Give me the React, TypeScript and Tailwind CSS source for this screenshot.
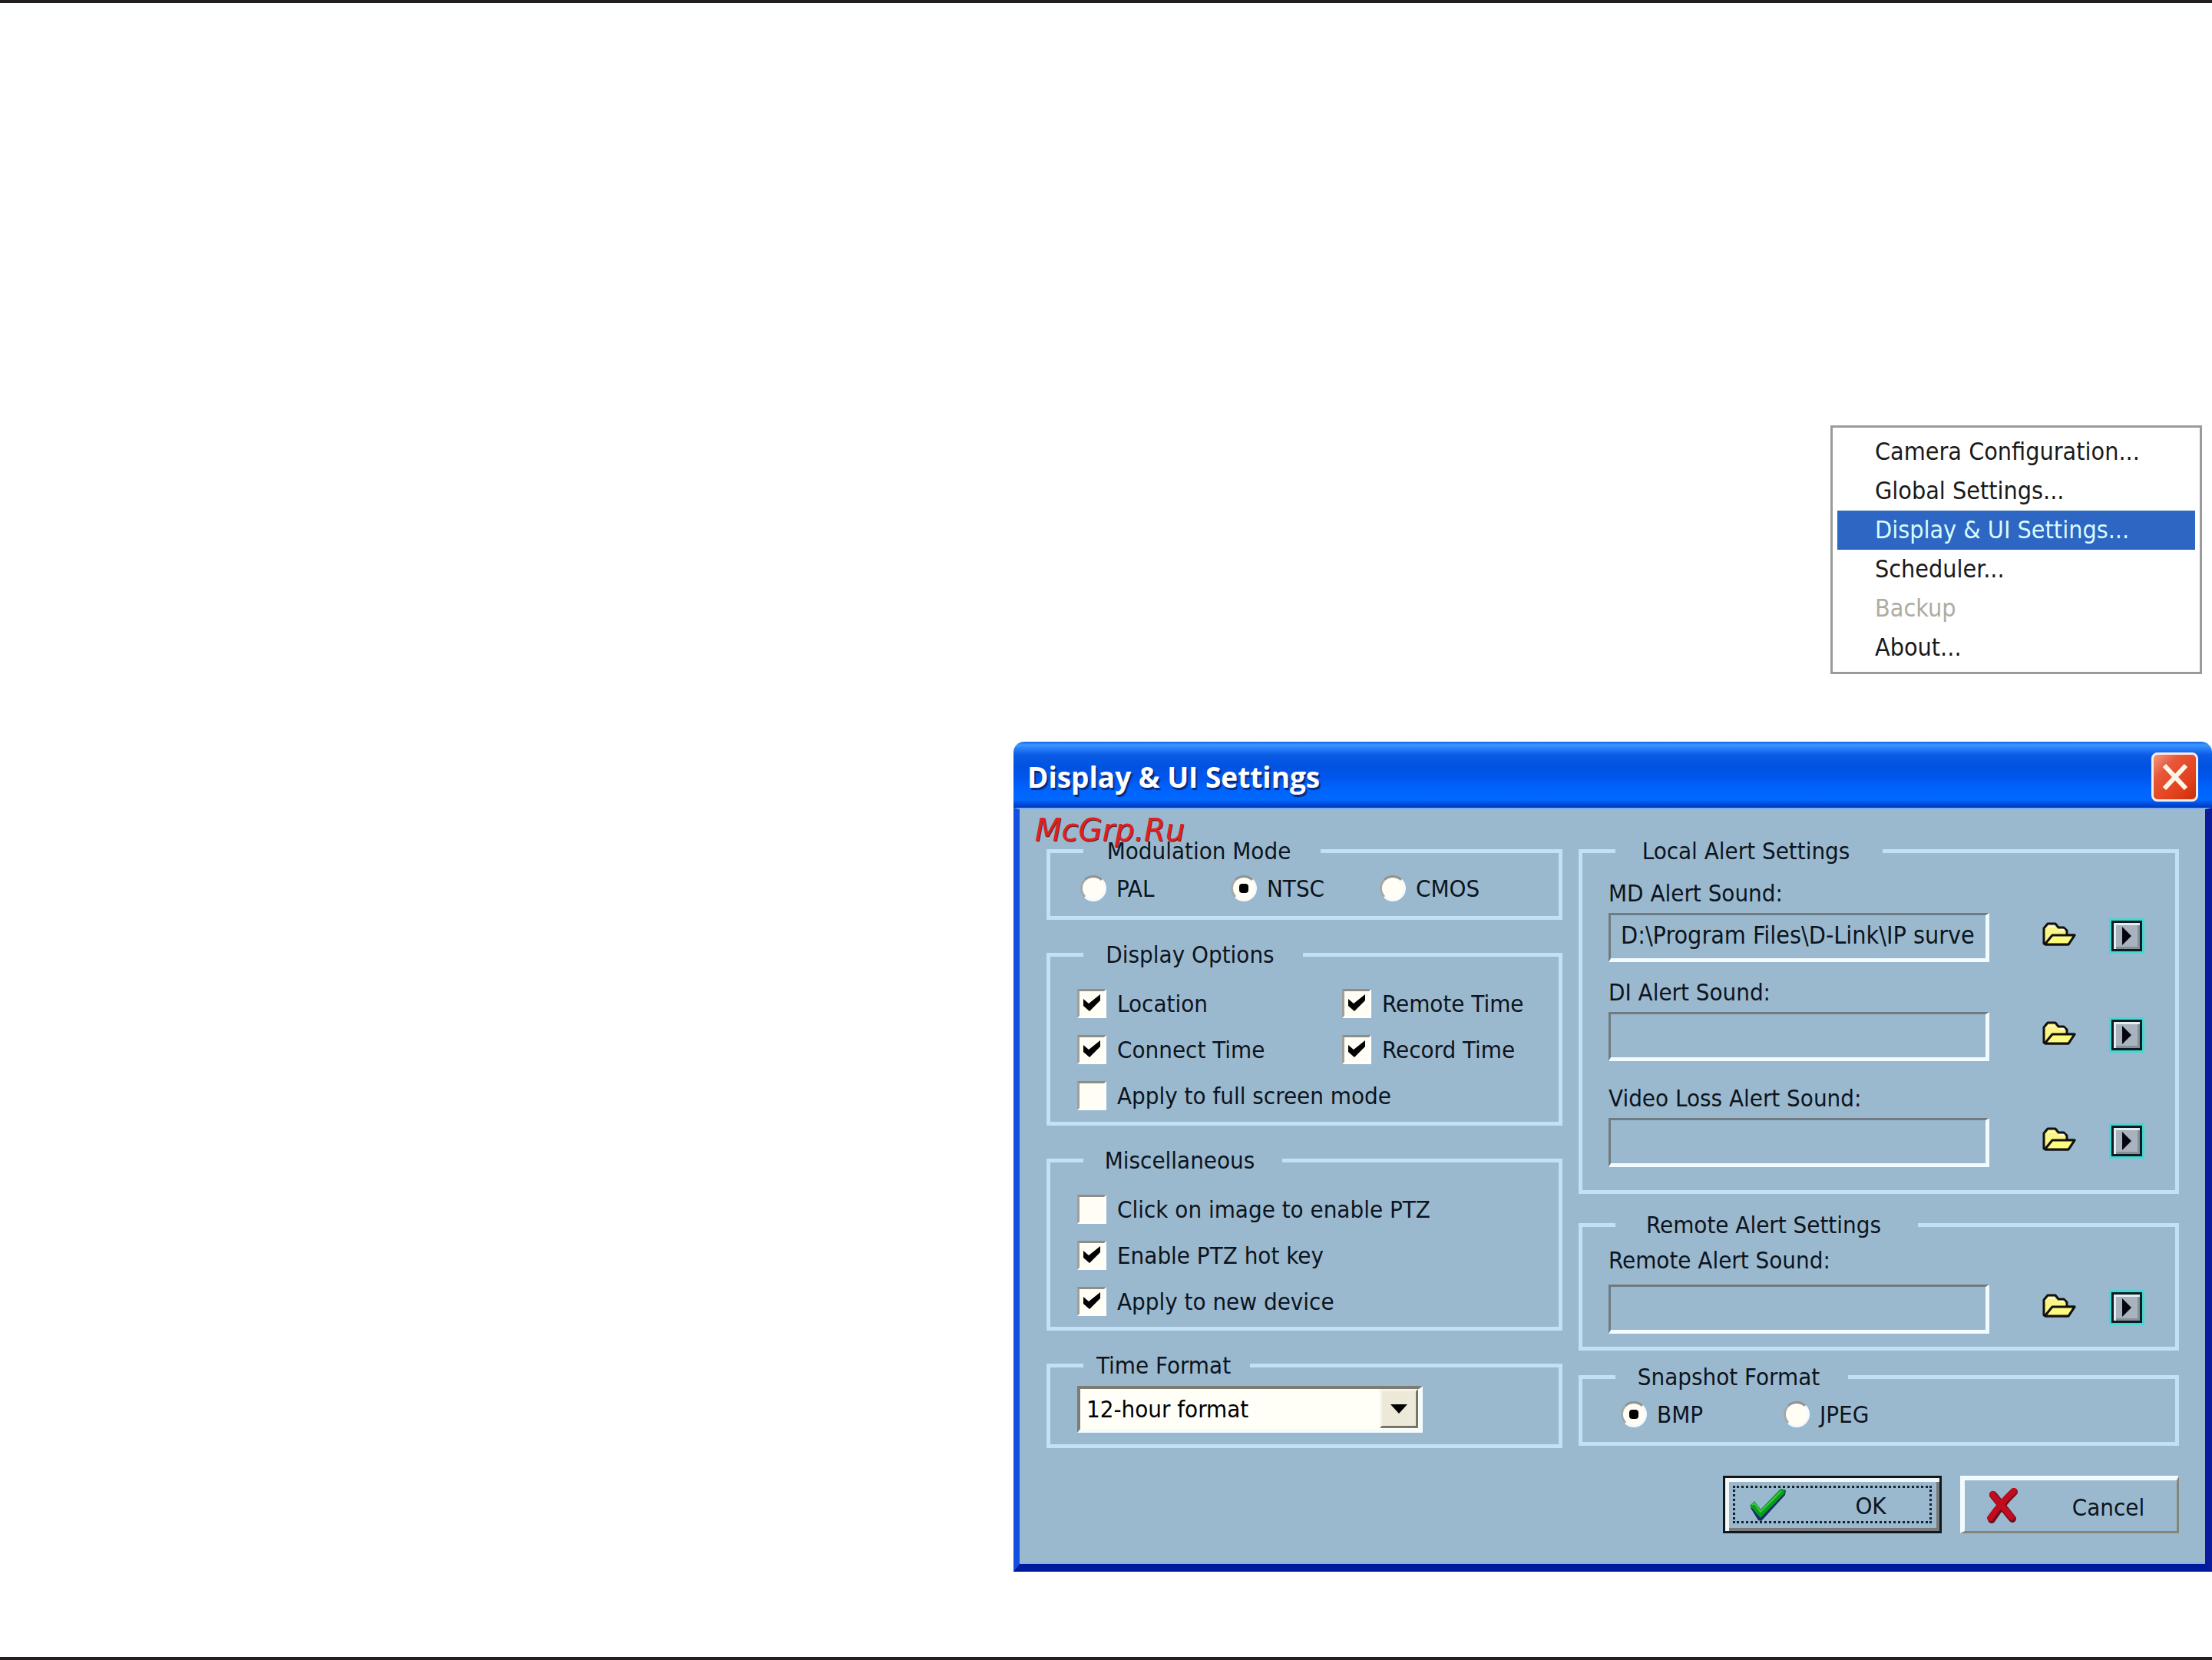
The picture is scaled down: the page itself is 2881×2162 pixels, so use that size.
import { useState } from "react"
import type { ReactNode } from "react"

const menuItems = [
  { label: "Camera Configuration..." },
  { label: "Global Settings..." },
  { label: "Display & UI Settings...", active: true },
  { label: "Scheduler..." },
  { label: "Backup", disabled: true },
  { label: "About..." },
]

function ContextMenu() {
  return (
    <nav className="border-[3px] border-[#9a9a9a] bg-white px-[6px] py-[6px] w-[484px]">
      {menuItems.map((item) => (
        <button
          key={item.label}
          type="button"
          disabled={item.disabled}
          className={
            item.active
              ? "block w-full h-[51px] pl-[49px] text-left text-[32px] leading-[51px] bg-[#2d66c3] text-[#d8fbff]"
              : "block w-full h-[51px] pl-[49px] text-left text-[32px] leading-[51px] text-[#1a1a1a] disabled:text-[#aeaca0]"
          }
        >
          {item.label}
        </button>
      ))}
    </nav>
  )
}

interface GroupProps {
  title: string
  legendClass: string
  className?: string
  children: ReactNode
}

function Group({ title, legendClass, className = "", children }: GroupProps) {
  return (
    <fieldset className={`min-w-0 border-[5px] border-[#c3e0f5] ${className}`}>
      <legend className={`flex justify-center ml-[43px] pr-2 h-9 leading-9 whitespace-nowrap ${legendClass}`}>
        {title}
      </legend>
      {children}
    </fieldset>
  )
}

function CheckOption({ label, defaultChecked = false }: { label: string; defaultChecked?: boolean }) {
  return (
    <label className="flex items-center gap-[14px] h-10 whitespace-nowrap">
      <span className="grid">
        <input
          type="checkbox"
          defaultChecked={defaultChecked}
          className="peer col-start-1 row-start-1 appearance-none w-[38px] h-[38px] bg-[#fffdf4] border-[3px] border-t-[#8f8d84] border-l-[#a19f96] border-r-white border-b-white"
        />
        <svg
          viewBox="0 0 38 38"
          className="col-start-1 row-start-1 w-[38px] h-[38px] invisible peer-checked:visible pointer-events-none"
        >
          <path d="M8 13 L15 19 L30 7 V15 L16 29 L8 22 Z" fill="#000" />
        </svg>
      </span>
      {label}
    </label>
  )
}

interface RadioOptionProps {
  name: string
  label: string
  checked: boolean
  onSelect: () => void
}

function RadioOption({ name, label, checked, onSelect }: RadioOptionProps) {
  return (
    <label className="flex items-center gap-[13px] h-9 whitespace-nowrap">
      <span className="grid place-items-center">
        <input
          type="radio"
          name={name}
          checked={checked}
          onChange={onSelect}
          className="peer col-start-1 row-start-1 appearance-none w-[34px] h-[34px] rounded-full bg-[#fffdf4] border-[3px] border-t-[#8f9290] border-l-[#a3a9a8] border-r-[#f4faff] border-b-[#f4faff]"
        />
        <span className="col-start-1 row-start-1 w-3 h-3 rounded-sm bg-black invisible peer-checked:visible pointer-events-none" />
      </span>
      {label}
    </label>
  )
}

function FolderIcon() {
  return (
    <svg viewBox="0 0 44 32" className="w-11 h-8">
      <path
        d="M2 28 V8 L7 2 H17 L21 7 H28 L32 11 V17 H42 L34 29 H4 Z"
        fill="#fbf486"
        stroke="#111"
        strokeWidth="3"
        strokeLinejoin="round"
      />
      <path d="M4 28 L13 17 H42 L34 29 H4 Z" fill="#fdfa7c" stroke="#111" strokeWidth="3" strokeLinejoin="round" />
      <path d="M8 6 H16 M22 10 H29" stroke="#fffde0" strokeWidth="2" />
    </svg>
  )
}

function SoundField({
  id,
  label,
  value = "",
  labelClass = "mb-2",
}: {
  id: string
  label: string
  value?: string
  labelClass?: string
}) {
  return (
    <div className="pl-[34px] pr-[43px]">
      <label htmlFor={id} className={`block h-9 leading-9 ${labelClass}`}>
        {label}
      </label>
      <div className="flex items-start">
        <input
          id={id}
          type="text"
          readOnly
          defaultValue={value}
          className="flex-1 min-w-0 h-16 pl-[13px] pb-1 text-[32px] bg-[#9bb9ce] border-t-[3px] border-l-[3px] border-r-[5px] border-b-[5px] border-t-[#6f7b80] border-l-[#6f7b80] border-r-[#f2fbff] border-b-[#f2fbff] outline-none"
        />
        <button type="button" aria-label={`Browse for ${label}`} className="mt-3 ml-[69px]">
          <FolderIcon />
        </button>
        <button
          type="button"
          aria-label={`Play ${label}`}
          className="mt-[10px] ml-[46px] grid place-items-center w-10 h-10 bg-[#a9b3bd] border-[3px] border-[#0c1c20] outline-[3px] outline-[#45d8d2] shadow-[inset_3px_3px_0_#e4edf4,inset_-3px_-3px_0_#84909a]"
        >
          <svg viewBox="0 0 12 24" className="w-3 h-6">
            <path d="M0 0 L12 12 L0 24 Z" fill="#050510" />
          </svg>
        </button>
      </div>
    </div>
  )
}

function TitleBar() {
  return (
    <header className="flex items-center justify-between h-[86px] pt-[6px] pl-[18px] pr-[18px] rounded-t-[14px] bg-[linear-gradient(to_bottom,#1268e8_0%,#3f98ff_5%,#2a80f8_10%,#0a5ce6_20%,#0052e0_38%,#0056ee_55%,#0064ff_72%,#0068ff_88%,#0048d8_95%,#0038b4_100%)]">
      <h1 className="font-['Open_Sans',sans-serif] font-bold text-[37px] text-white [text-shadow:2px_3px_1px_#0a2a80]">
        Display &amp; UI Settings
      </h1>
      <button
        type="button"
        aria-label="Close"
        className="grid place-items-center w-[61px] h-16 rounded-lg border-[3px] border-[#f6ece8] bg-[linear-gradient(135deg,#f09a80_0%,#e8573a_30%,#e2401c_70%,#c8300c_100%)]"
      >
        <svg viewBox="0 0 34 34" className="w-[34px] h-[34px]">
          <path d="M3 2 L31 32 M31 2 L3 32" stroke="#fff6e6" strokeWidth="6" />
        </svg>
      </button>
    </header>
  )
}

function SettingsDialog() {
  const [mode, setMode] = useState("NTSC")
  const [snapshot, setSnapshot] = useState("BMP")

  return (
    <section className="text-[31px] text-[#0c1420]">
      <TitleBar />
      <div className="relative pt-9 pb-[40px] pl-[35px] pr-[34px] bg-[#9bb9ce] border-t-2 border-t-[#7fb0ee] border-l-8 border-l-[#1450e0] border-r-[9px] border-r-[#0a1c9c] border-b-[10px] border-b-[#001a9c] shadow-[inset_0_-2px_0_#86b0ee]">
        <div className="grid grid-cols-[672fr_782fr] gap-x-[21px]">
          <div className="flex flex-col gap-[27px]">
            <Group title="Modulation Mode" legendClass="w-[309px]">
              <div className="grid grid-cols-[196px_194px_1fr] pt-[13px] pb-[18px] pl-[39px]">
                {["PAL", "NTSC", "CMOS"].map((m) => (
                  <RadioOption key={m} name="modulation" label={m} checked={mode === m} onSelect={() => setMode(m)} />
                ))}
              </div>
            </Group>

            <Group title="Display Options" legendClass="w-[286px]">
              <div className="grid grid-cols-[345px_1fr] gap-y-5 pt-[26px] pb-[14px] pl-[35px]">
                <CheckOption label="Location" defaultChecked />
                <CheckOption label="Remote Time" defaultChecked />
                <CheckOption label="Connect Time" defaultChecked />
                <CheckOption label="Record Time" defaultChecked />
                <CheckOption label="Apply to full screen mode" />
              </div>
            </Group>

            <Group title="Miscellaneous" legendClass="w-[259px]">
              <div className="flex flex-col gap-5 pt-[26px] pb-[13px] pl-[35px]">
                <CheckOption label="Click on image to enable PTZ" />
                <CheckOption label="Enable PTZ hot key" defaultChecked />
                <CheckOption label="Apply to new device" defaultChecked />
              </div>
            </Group>

            <Group title="Time Format" legendClass="w-[217px]">
              <div className="pt-[9px] pb-[15px] pl-[35px]">
                <div className="relative w-[450px]">
                  <select
                    aria-label="Time Format"
                    className="block appearance-none w-full h-[61px] pl-2 text-black bg-[#fffff8] border-t-[4px] border-l-[4px] border-r-[5px] border-b-[5px] border-t-[#7d7b72] border-l-[#7d7b72] border-r-[#f4fbff] border-b-[#f4fbff]"
                  >
                    <option>12-hour format</option>
                    <option>24-hour format</option>
                  </select>
                  <span className="absolute right-[6px] top-1 grid place-items-center w-[50px] h-[51px] bg-[#ece9d8] border-[3px] border-t-[#f6f4ea] border-l-[#f6f4ea] border-r-[#77746a] border-b-[#77746a] pointer-events-none">
                    <svg viewBox="0 0 22 12" className="w-[22px] h-3">
                      <path d="M0 0 H22 L11 12 Z" fill="#000" />
                    </svg>
                  </span>
                </div>
              </div>
            </Group>
          </div>

          <div>
            <Group title="Local Alert Settings" legendClass="w-[348px]">
              <div className="pt-[19px]">
                <SoundField id="md-sound" label="MD Alert Sound:" value="D:\Program Files\D-Link\IP surve" />
              </div>
              <div className="pt-[21px]">
                <SoundField id="di-sound" label="DI Alert Sound:" />
              </div>
              <div className="py-[30px]">
                <SoundField id="loss-sound" label="Video Loss Alert Sound:" />
              </div>
            </Group>

            <Group title="Remote Alert Settings" legendClass="w-[394px]" className="mt-[22px]">
              <div className="pt-[10px] pb-[17px]">
                <SoundField id="remote-sound" label="Remote Alert Sound:" labelClass="mb-[14px]" />
              </div>
            </Group>

            <Group title="Snapshot Format" legendClass="w-[303px]" className="mt-4">
              <div className="grid grid-cols-[212px_1fr] pt-[13px] pb-[18px] pl-[50px]">
                {["BMP", "JPEG"].map((f) => (
                  <RadioOption
                    key={f}
                    name="snapshot"
                    label={f}
                    checked={snapshot === f}
                    onSelect={() => setSnapshot(f)}
                  />
                ))}
              </div>
            </Group>
          </div>
        </div>

        <div className="flex justify-end gap-6 mt-9">
          <button
            type="button"
            className="relative flex items-center w-[285px] h-[75px] border-[3px] border-[#10181c] shadow-[inset_5px_5px_0_#f3f7f8,inset_-4px_-4px_0_#77797a]"
          >
            <span className="absolute inset-[10px] border-[3px] border-dotted border-[#1a2028]" />
            <svg viewBox="0 0 50 44" className="w-[50px] h-11 ml-[30px]">
              <path d="M3 26 L9 19 L17 29 L43 2 L49 3 L48 9 L17 43 L13 42 Z" fill="#12306a" />
              <path d="M2 23 L8 17 L16 28 L42 1 L48 2 L47 7 L16 39 Z" fill="#0a9c1a" />
              <path d="M5 22 L8 20 L16 31 L43 4" fill="none" stroke="#3ecb3c" strokeWidth="2" />
            </svg>
            <span className="flex-1 pt-1 pl-5 text-center">OK</span>
          </button>
          <button
            type="button"
            className="flex items-center w-[285px] h-[75px] border-t-[6px] border-l-[6px] border-r-[3px] border-b-[3px] border-t-[#f2fbff] border-l-[#f2fbff] border-r-[#85857c] border-b-[#85857c]"
          >
            <svg viewBox="0 0 42 46" className="w-[42px] h-[46px] ml-[28px]">
              <path d="M9 9 Q18 20 34 40 M36 5 Q22 18 7 41" fill="none" stroke="#6b1020" strokeWidth="10" strokeLinecap="round" />
              <path d="M8 8 Q17 19 33 38 M36 4 Q20 18 5 39" fill="none" stroke="#c00c1c" strokeWidth="8" strokeLinecap="round" />
            </svg>
            <span className="flex-1 pt-1 pl-7 text-center">Cancel</span>
          </button>
        </div>

        <p className="absolute left-5 top-1 font-['DejaVu_Sans',sans-serif] italic text-[40px] leading-[46px] text-[#e02020] [text-shadow:1px_1px_0_#5a1a1a]">
          McGrp.Ru
        </p>
      </div>
    </section>
  )
}

export default function App() {
  return (
    <main className="flex flex-col bg-white border-y-4 border-[#231f20] pt-[550px] pb-[111px] font-['DejaVu_Sans_Condensed','DejaVu_Sans',sans-serif]">
      <div className="flex justify-end pr-[13px]">
        <ContextMenu />
      </div>
      <div className="mt-[88px] ml-[1320px]">
        <SettingsDialog />
      </div>
    </main>
  )
}
